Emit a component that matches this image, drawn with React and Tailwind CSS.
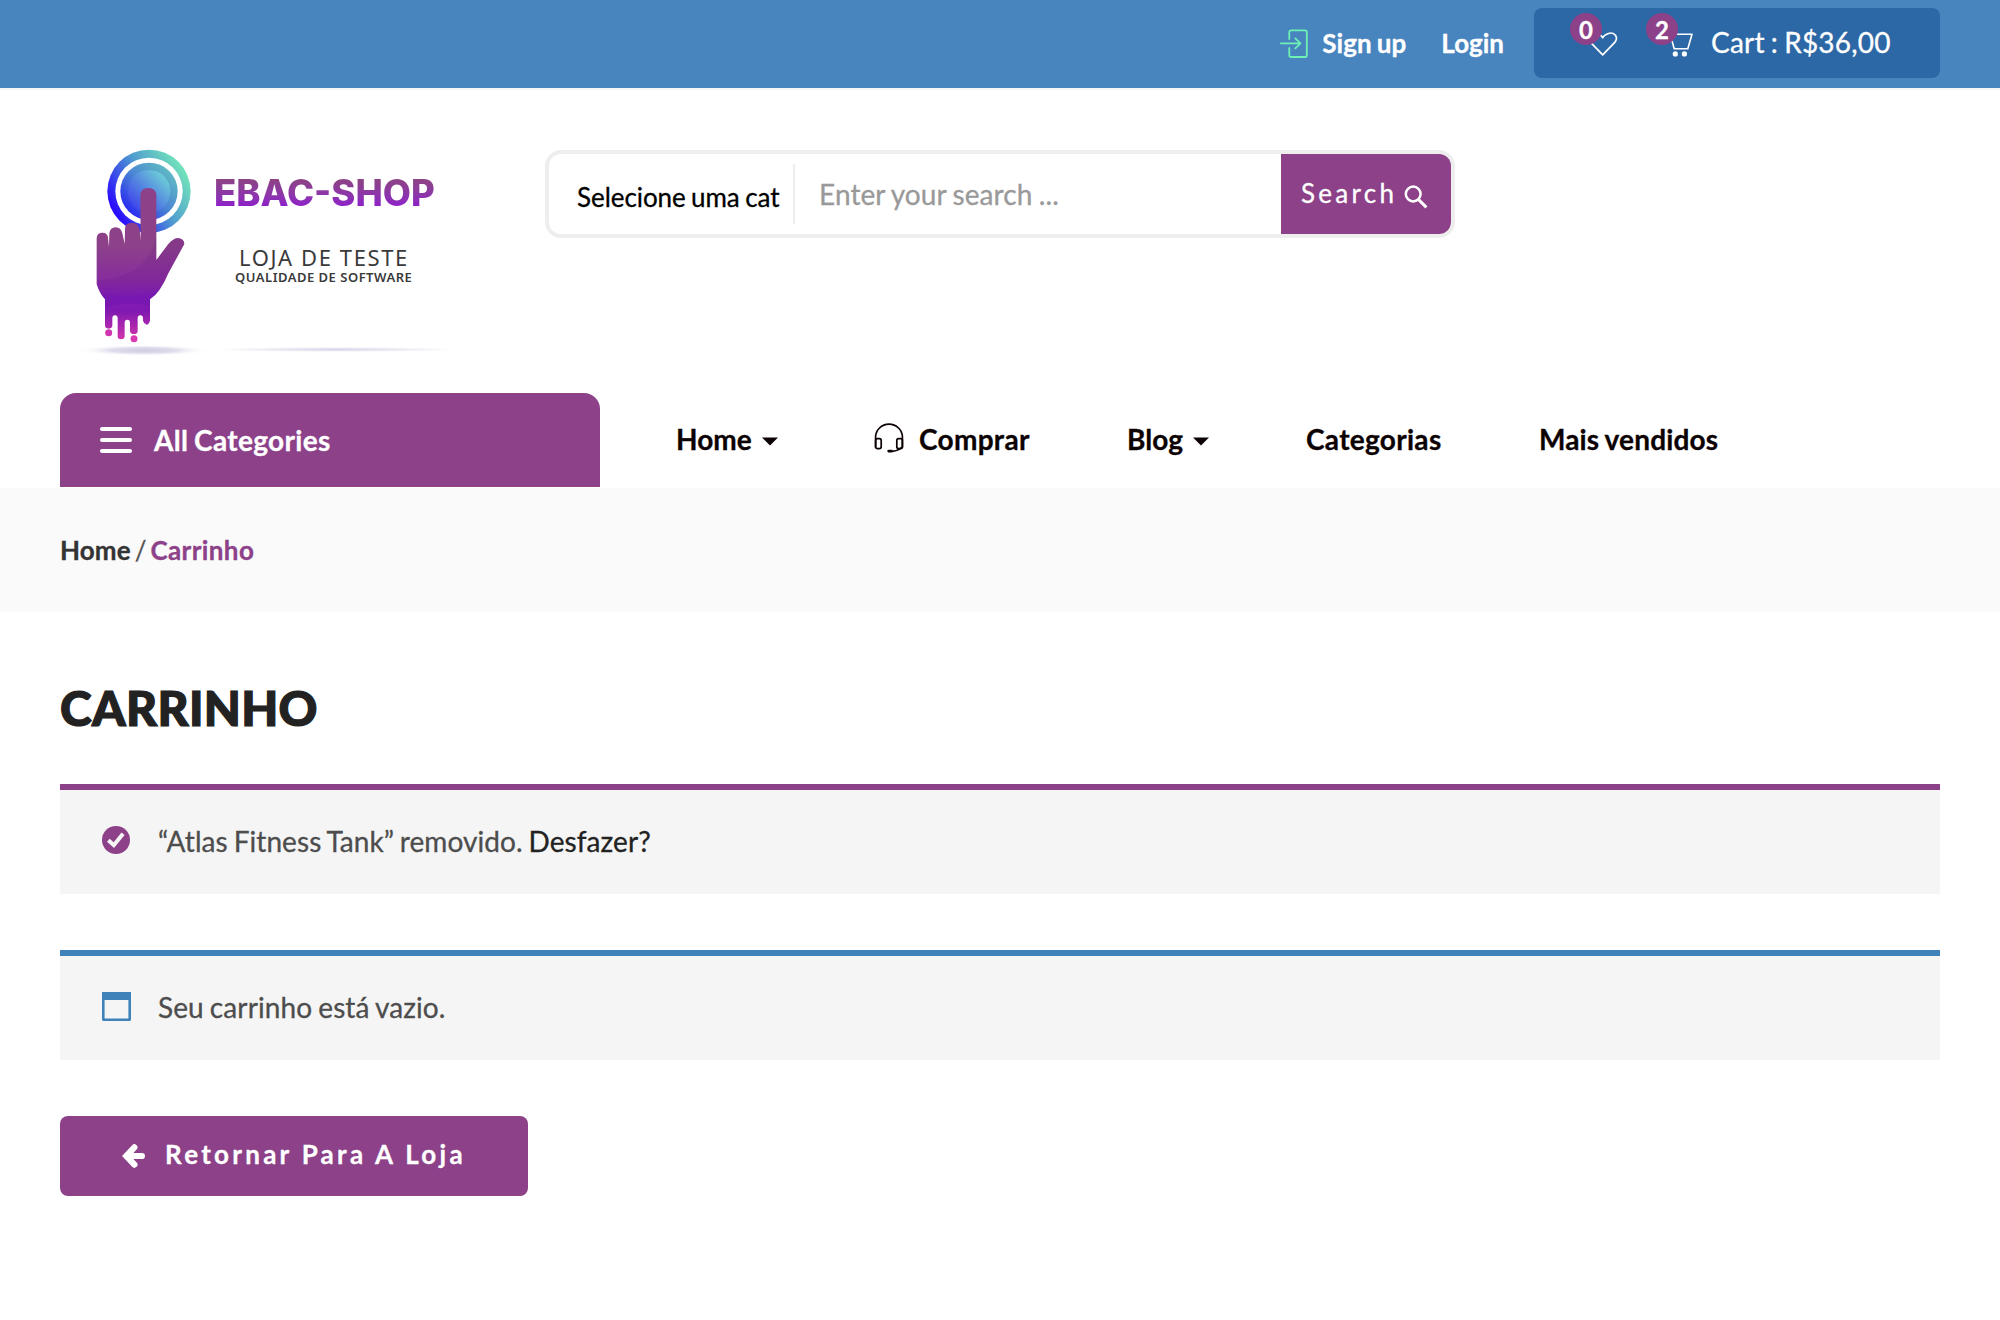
import React from "react";

function LoginIcon() {
  return (
    <svg width="28" height="30" viewBox="0 0 28 30" fill="none" stroke="#6df2b4" strokeWidth="1.8" strokeLinecap="round" strokeLinejoin="round">
      <path d="M9.3 10V3.2Q9.3 1.4 11.1 1.4H25Q26.8 1.4 26.8 3.2V26.2Q26.8 28 25 28H11.1Q9.3 28 9.3 26.2V18.8" />
      <path d="M.9 14.4H20M15.3 9.4l5.2 5-5.2 5" />
    </svg>
  );
}

function HeartIcon() {
  return (
    <svg width="28" height="28" viewBox="0 0 28 28" fill="none" stroke="#fff" strokeWidth="1.7" strokeLinejoin="round" className="overflow-visible">
      <path d="M12.7 25.8L23.8 14.4C26.8 11.2 27.2 8.6 25.6 6.4C23.8 3.9 20.4 3.7 17.8 4.7C15.2 5.7 13.6 6.6 12.7 8.8C11.8 6.6 10.2 5.7 7.6 4.7C5 3.7 1.6 3.9-.2 6.4C-1.8 8.6-1.4 11.2 1.6 14.4Z" />
    </svg>
  );
}

function CartIcon() {
  return (
    <svg width="28" height="28" viewBox="0 0 28 28" fill="none" stroke="#fff" strokeWidth="1.6" strokeLinejoin="round" strokeLinecap="round">
      <path d="M1 3h2.6l1.6 2.3H27L22.8 19.8H9.2L5.2 5.3" />
      <circle cx="10.3" cy="24.9" r="2.6" fill="#fff" stroke="none" />
      <circle cx="19.4" cy="24.9" r="2.6" fill="#fff" stroke="none" />
    </svg>
  );
}

function HeadsetIcon() {
  return (
    <svg width="30" height="30" viewBox="0 0 30 30" fill="none" stroke="#0c0203" strokeWidth="1.7" strokeLinejoin="round" strokeLinecap="round">
      <path d="M1.6 24V14.2a13.4 13 0 0 1 26.8 0V24" />
      <rect x="1.6" y="15.6" width="5.6" height="10" rx="1.8" />
      <rect x="22.8" y="15.6" width="5.6" height="10" rx="1.8" />
      <path d="M27.6 24.6q-4.6 3.6-9.6 3.7" />
      <path d="M14.6 28.1h3" strokeWidth="2.6" />
    </svg>
  );
}

function SearchIcon() {
  return (
    <svg width="24" height="24" viewBox="0 0 24 24" fill="none" stroke="#fff">
      <circle cx="9.2" cy="9" r="7.4" strokeWidth="2.5" />
      <path d="M14.4 14.4l8 8" strokeWidth="3" />
    </svg>
  );
}

function CheckIcon() {
  return (
    <svg width="28" height="28" viewBox="0 0 28 28">
      <circle cx="14" cy="14" r="14" fill="#8c4189" />
      <path d="M7.8 15.6l4 3.6 8-10" fill="none" stroke="#f5f5f5" strokeWidth="4" strokeLinecap="square" />
    </svg>
  );
}

function WindowIcon() {
  return (
    <svg width="29" height="29" viewBox="0 0 29 29">
      <path d="M0 0H29V27.6Q29 29 27.6 29H1.4Q0 29 0 27.6ZM2.6 8V26.4H26.4V8Z" fill="#3f82b9" fillRule="evenodd" />
    </svg>
  );
}

function ArrowIcon() {
  return (
    <svg width="23" height="24" viewBox="0 0 23 24" fill="none" stroke="#fff" strokeWidth="6.2" strokeLinejoin="miter">
      <path d="M12.4 3.4L4.3 12l8.1 8.6" strokeLinecap="round" />
      <path d="M5 12h14.9" strokeLinecap="round" />
    </svg>
  );
}

function HandLogo() {
  const hand =
    "M110 325Q110 308 127 308Q144 308 144 325L147 350L148 310Q150 292 167 292Q183 292 187 310L194 342L195 297Q195 278 215 278Q236 278 239 300L242 332L241 198Q241 174 265 174Q289 174 289 198V390L325 342Q340 325 352 324Q373 326 373 342L325 430Q300 490 270 508V572Q266 584 260 584Q252 582 249 572V566Q249 556 241 556Q233 556 233 566V602Q233 612 222 612Q210 612 210 602V578Q210 569 202 569Q194 569 194 578V618Q194 628 183 628Q173 628 173 618V566Q173 556 165 556Q157 556 157 566V586Q157 596 146 596Q135 596 135 586V508Q118 490 110 462Z";
  return (
    <svg width="150" height="240" viewBox="0 0 450 720">
      <defs>
        <linearGradient id="ring" x1="0.1" y1="0.75" x2="0.9" y2="0.25">
          <stop offset="0" stopColor="#2a0cff" />
          <stop offset="0.55" stopColor="#4f9bd0" />
          <stop offset="1" stopColor="#70dfbb" />
        </linearGradient>
        <linearGradient id="disk" x1="0.15" y1="0.85" x2="0.85" y2="0.15">
          <stop offset="0" stopColor="#2a2cf0" />
          <stop offset="0.5" stopColor="#4a84d4" />
          <stop offset="1" stopColor="#5fb8c4" />
        </linearGradient>
        <linearGradient id="core" x1="0.15" y1="0.85" x2="0.85" y2="0.15">
          <stop offset="0" stopColor="#4048ea" />
          <stop offset="1" stopColor="#6ccbd8" />
        </linearGradient>
        <linearGradient id="skin" gradientUnits="userSpaceOnUse" x1="0" y1="174" x2="0" y2="636">
          <stop offset="0" stopColor="#8c4189" />
          <stop offset="0.38" stopColor="#8c4189" />
          <stop offset="0.6" stopColor="#872c9f" />
          <stop offset="0.7" stopColor="#811db6" />
          <stop offset="0.8" stopColor="#8019b0" />
          <stop offset="1" stopColor="#d838ac" />
        </linearGradient>
        <radialGradient id="shade">
          <stop offset="0" stopColor="#cfcbe2" />
          <stop offset="0.5" stopColor="#e0ddec" />
          <stop offset="1" stopColor="#fff" stopOpacity="0" />
        </radialGradient>
        <clipPath id="handClip">
          <path d={hand} />
        </clipPath>
      </defs>
      <ellipse cx="250" cy="661" rx="200" ry="17" fill="url(#shade)" />
      <circle cx="267" cy="184" r="125" fill="url(#ring)" />
      <circle cx="267" cy="184" r="101" fill="#fff" />
      <circle cx="267" cy="184" r="86" fill="url(#disk)" />
      <circle cx="267" cy="184" r="64" fill="url(#core)" />
      <path d={hand} fill="url(#skin)" />
      <circle cx="146" cy="608" r="10.5" fill="#cf36b0" />
      <circle cx="222" cy="626" r="10.5" fill="#d93ab2" />
      <g clipPath="url(#handClip)">
        <path d="M289 320Q262 442 110 452V492Q220 510 290 484L390 400V300Z" fill="#5b0f8a" fillOpacity="0.14" />
        <path d="M110 488Q220 512 300 480V540Q220 500 110 540Z" fill="#5a0ca8" fillOpacity="0.22" />
      </g>
    </svg>
  );
}

function Caret() {
  return (
    <svg width="16" height="9" viewBox="0 0 16 9" className="ml-[10px] mt-[5px]">
      <path d="M0 .5H16L8 8.5Z" fill="#0c0203" />
    </svg>
  );
}

export default function App() {
  return (
    <div className="min-h-[1320px] w-[2000px] bg-white font-['Lato',sans-serif] text-[28px] leading-none text-[#4d4d4d] [-webkit-text-stroke:0.3px]">
      <header className="flex h-[90px] justify-end border-b-2 border-[#f5f5f5] bg-[#4884be] pr-[60px] text-white">
        <div className="flex h-[86px] items-center text-[26px] font-bold">
          <span className="mt-[2px]"><LoginIcon /></span>
          <span className="ml-[14px] tracking-[0.1px] [word-spacing:-1.5px]">Sign up</span>
          <span className="ml-[35px]">Login</span>
        </div>
        <div className="ml-[30px] mt-2 flex h-[70px] w-[406px] items-center rounded-lg bg-[#2d68a6] pl-[56px]">
          <div className="relative">
            <HeartIcon />
            <span className="absolute -left-[20px] -top-[16px] flex size-8 items-center justify-center rounded-full bg-[#8c4189] pt-px text-[24px] font-bold">0</span>
          </div>
          <div className="relative ml-[47px]">
            <CartIcon />
            <span className="absolute -left-[19px] -top-[16px] flex size-8 items-center justify-center rounded-full bg-[#8c4189] pt-px text-[24px] font-bold">2</span>
          </div>
          <span className="-mt-[2px] ml-[18px] tracking-[0.2px] [word-spacing:-1.2px]">Cart : R$36,00</span>
        </div>
      </header>

      <section className="flex h-[303px] pl-[60px] pt-10">
        <div className="flex h-[240px] w-[485px] [-webkit-text-stroke:0px]">
          <HandLogo />
          <div className="flex w-[250px] flex-col">
            <div className="mt-[41px] bg-linear-to-b from-[#8c4189] from-25% to-[#8e1fc8] to-80% bg-clip-text pl-[4px] font-['Inter',sans-serif] text-[36.5px] font-extrabold leading-[44px] text-transparent">EBAC-SHOP</div>
            <div className="mt-[29px] pl-[29px] font-['Noto_Sans',sans-serif] text-[22px] leading-[26px] tracking-[1.6px] text-[#3a3a3a]">LOJA DE TESTE</div>
            <div className="pl-[25px] font-['Noto_Sans',sans-serif] text-[13px] font-semibold leading-[14px] tracking-[0.5px] text-[#3a3a3a]">QUALIDADE DE SOFTWARE</div>
            <div className="ml-[6px] mt-[63px] h-[5px] w-[240px] bg-[radial-gradient(closest-side,#d6d2e6,transparent)]" />
          </div>
        </div>
        <form className="mt-5 flex h-[88px] w-[910px] items-center overflow-hidden rounded-2xl border-4 border-[#eeeeee]">
          <span className="w-[244px] whitespace-nowrap pl-[28px] pt-[5px] text-[26px] tracking-[-0.06px] text-black [word-spacing:-1.2px]">Selecione uma cat</span>
          <span className="h-[60px] w-[2px] bg-[#eeeeee]" />
          <span className="-mt-px flex-1 pl-[24px] tracking-[0.1px] text-[#999999] [word-spacing:-1px]">Enter your search ...</span>
          <span className="flex h-full w-[170px] items-center bg-[#8c4189] pl-[20px] text-white">
            <span className="-mt-[2px] text-[26px] tracking-[3.3px]">Search</span>
            <span className="ml-[7px] mt-[5px]"><SearchIcon /></span>
          </span>
        </form>
      </section>

      <nav className="flex h-[95px] pl-[60px] font-bold text-[#0c0203]">
        <div className="flex h-[94px] w-[540px] items-center rounded-t-2xl bg-[#8c4189] pl-10 text-white">
          <div className="flex w-8 flex-col gap-[7px]">
            <span className="h-1 rounded-full bg-white" />
            <span className="h-1 rounded-full bg-white" />
            <span className="h-1 rounded-full bg-white" />
          </div>
          <span className="ml-[22px] tracking-[0.35px] [word-spacing:-1.5px]">All Categories</span>
        </div>
        <div className="flex h-[91px] items-center pl-[76px]">
          <span className="flex w-[198px] items-center">Home<Caret /></span>
          <span className="flex w-[253px] items-center tracking-[0.3px]">
            <span className="-mt-[2px] mr-[15px]"><HeadsetIcon /></span>Comprar
          </span>
          <span className="flex w-[179px] items-center">Blog<Caret /></span>
          <span className="w-[233px] tracking-[0.3px]">Categorias</span>
          <span className="tracking-[0.15px] [word-spacing:-1px]">Mais vendidos</span>
        </div>
      </nav>

      <div className="flex h-[124px] items-center bg-[#fafafa] pl-[60px] text-[26px] font-bold">
        <span className="tracking-[0.1px] text-[#333333]">Home</span>
        <span className="ml-[4px] font-normal text-[#555555]">/</span>
        <span className="ml-[4px] tracking-[0.4px] text-[#8c4189]">Carrinho</span>
      </div>

      <main className="px-[60px] pt-[68px]">
        <h1 className="h-[104px] text-[48px] font-black leading-[56px] tracking-[0.3px] text-[#222222] [-webkit-text-stroke:1.2px]">CARRINHO</h1>
        <div className="flex h-[110px] items-center border-t-[6px] border-[#8c4189] bg-[#f5f5f5] pl-[42px]">
          <span className="-mt-[4px]"><CheckIcon /></span>
          <p className="-mt-[2px] ml-[28px] tracking-[0.08px] [word-spacing:-1.4px]">“Atlas Fitness Tank” removido. <span className="text-[#222222]">Desfazer?</span></p>
        </div>
        <div className="mt-14 flex h-[110px] items-center border-t-[6px] border-[#3f82b9] bg-[#f5f5f5] pl-[41.5px]">
          <span className="-mt-[3px]"><WindowIcon /></span>
          <p className="-mt-[2px] ml-[27.5px] tracking-[0.1px] [word-spacing:-1.2px]">Seu carrinho está vazio.</p>
        </div>
        <button className="mt-14 flex h-20 w-[468px] items-center rounded-lg bg-[#8c4189] pl-[62px] font-bold text-white">
          <span className="-mt-px"><ArrowIcon /></span>
          <span className="-mt-[5px] ml-[20px] text-[26px] tracking-[3.28px]">Retornar Para A Loja</span>
        </button>
      </main>
    </div>
  );
}
